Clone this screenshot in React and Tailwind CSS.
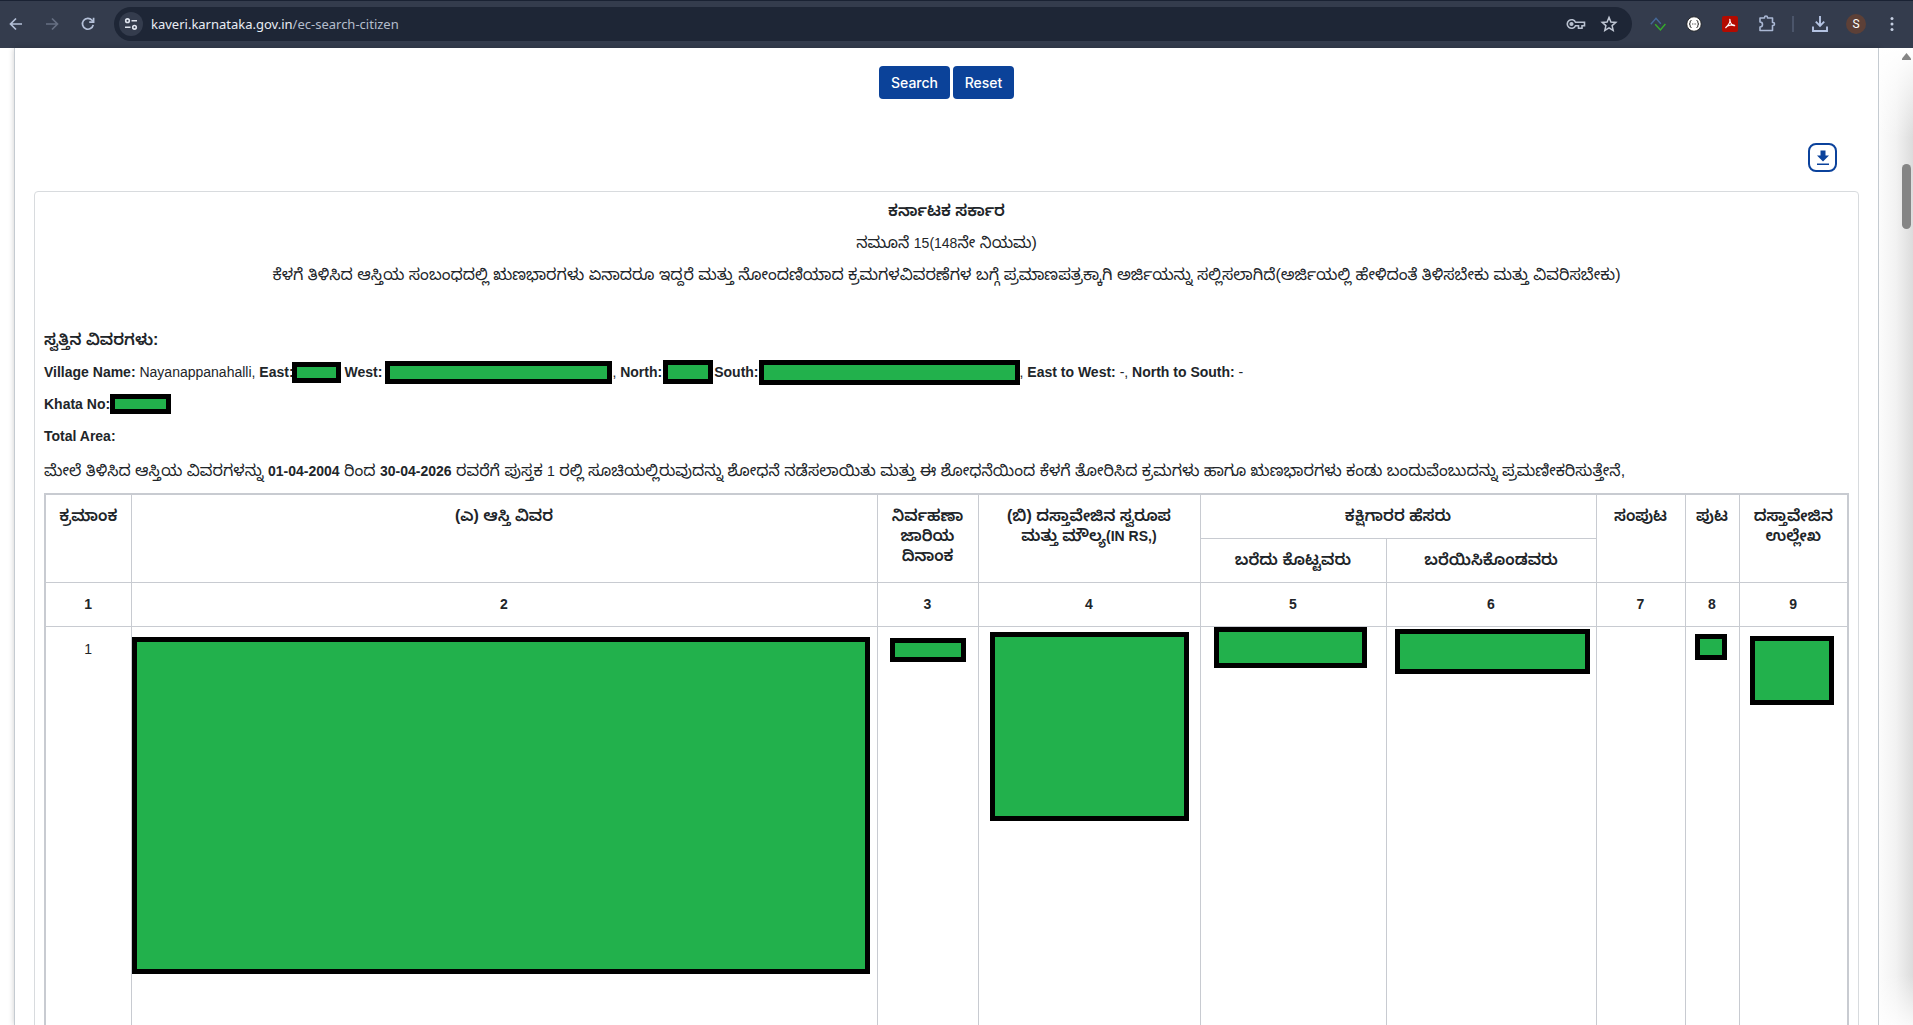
import React from "react";

const iconButton = "flex items-center justify-center shrink-0";

function BrowserBar() {
  return (
    <header className="flex h-12 shrink-0 items-center border-t border-[#1a2233] bg-[#343c4d] pb-px pr-[13px] text-[#b9c5dc]">
      <button aria-label="Back" className={`${iconButton} w-8`}>
        <svg width="16" height="16" viewBox="0 0 16 16" fill="none" stroke="#b4c0d8" strokeWidth="1.7">
          <path d="M14 8H3M8 2.5 2.5 8 8 13.5" />
        </svg>
      </button>
      <button aria-label="Forward" className={`${iconButton} ml-1 w-8`}>
        <svg width="16" height="16" viewBox="0 0 16 16" fill="none" stroke="#666f82" strokeWidth="1.7">
          <path d="M2 8h11M8 2.5 13.5 8 8 13.5" />
        </svg>
      </button>
      <button aria-label="Reload" className={`${iconButton} ml-1 w-8`}>
        <svg width="16" height="16" viewBox="0 0 16 16" fill="none" stroke="#b4c0d8" strokeWidth="1.7">
          <path d="M13.2 8.8A5.4 5.4 0 1 1 12 4.300L13.5 6" />
          <path d="M13.6 1.8V6.2H9.2" />
        </svg>
      </button>
      <div className="ml-[10px] flex h-[34px] flex-1 items-center rounded-full bg-[#1e2636] pl-[5px] pr-[14px]">
        <button aria-label="Site information" className={`${iconButton} size-6 rounded-full bg-[#343c4d]`}>
          <svg width="14" height="14" viewBox="0 0 14 14" fill="none" stroke="#dfe4ee" strokeWidth="1.6">
            <circle cx="3.5" cy="3.7" r="1.8" />
            <path d="M7.5 3.7H13M1 10.3h5.5" />
            <circle cx="10.5" cy="10.3" r="1.8" />
          </svg>
        </button>
        <p className="ml-2 flex-1 font-['Noto_Sans',sans-serif] text-[13px] leading-5 text-[#b4bdcc]">
          <span className="text-[#e9edf5]">kaveri.karnataka.gov.in</span>/ec-search-citizen
        </p>
        <button aria-label="Passwords" className={iconButton}>
          <svg width="20" height="16" viewBox="0 0 20 16" fill="none" stroke="#b9c1d0" strokeWidth="1.6">
            <path d="M9.500 6.300A4.300 4.300 0 1 0 9.500 9.700H12.500V12.300H16V9.700H18.500V6.300Z" />
            <circle cx="5.5" cy="8" r="1.3" fill="#b9c1d0" />
          </svg>
        </button>
        <button aria-label="Bookmark this tab" className={`${iconButton} ml-[14px]`}>
          <svg width="18" height="18" viewBox="0 0 18 18" fill="none" stroke="#c0c7d4" strokeWidth="1.5">
            <path d="M9 2.400 10.900 7l4.900.400-3.700 3.200 1.100 4.800L9 12.900l-4.200 2.500 1.100-4.800L2.200 7.400 7.100 7Z" />
          </svg>
        </button>
      </div>
      <button aria-label="Diff extension" className={`${iconButton} ml-[18px]`}>
        <svg width="16" height="16" viewBox="0 0 16 16" fill="none" strokeWidth="1.4">
          <path d="M.8 8.200 6 2.200l4.800 5.600" stroke="#46699a" />
          <path d="M5.200 8.200 10.400 14l5-6" stroke="#35ad2b" />
        </svg>
      </button>
      <button aria-label="Code extension" className={`${iconButton} ml-5`}>
        <svg width="16" height="16" viewBox="0 0 16 16" fill="none">
          <circle cx="8" cy="8" r="7.2" fill="#fff" stroke="#1c1c1c" strokeWidth="0.8" />
          <path d="M5.500 4.500q-1.400 0-1.400 1.400v1q0 1.100-1 1.100 1 0 1 1.100v1q0 1.400 1.400 1.400M10.500 4.500q1.400 0 1.400 1.400v1q0 1.100 1 1.100-1 0-1 1.100v1q0 1.400-1.400 1.400" stroke="#222" />
          <path d="M6 8h.8M7.700 8h.8M9.300 8h.8" stroke="#333" />
        </svg>
      </button>
      <button aria-label="PDF extension" className={`${iconButton} ml-5`}>
        <svg width="16" height="16" viewBox="0 0 16 16">
          <rect width="16" height="16" rx="2" fill="#b30b00" />
          <path d="M7.800 3.300c.6 1.700-.2 4.700-4.100 8.400.9-1.500 2.700-2.300 4.600-2.600 2-.300 4-.2 4.400.6-1.800.3-4.700-1.700-4.900-6.400Z" fill="none" stroke="#fff" strokeWidth="1.2" strokeLinejoin="round" />
        </svg>
      </button>
      <button aria-label="Extensions" className={`${iconButton} ml-5`}>
        <svg width="18" height="18" viewBox="0 0 18 18" fill="none" stroke="#aab8d4" strokeWidth="1.6" strokeLinejoin="round">
          <path d="M2 3h4.500V2.500a1.500 1.500 0 0 1 3 0V3H14.500V7.500h.5a1.500 1.500 0 0 1 0 3h-.5V15.500H2V12a2.500 2.500 0 0 0 0-5Z" />
        </svg>
      </button>
      <span className="ml-4 h-4 w-[2px] bg-[#4b556a]" />
      <button aria-label="Downloads" className={`${iconButton} ml-[17px]`}>
        <svg width="18" height="18" viewBox="0 0 18 18" fill="none" stroke="#b4c3e2" strokeWidth="1.9">
          <path d="M9 1v9.500M4.800 6.700 9 10.900l4.200-4.200M2 11.500v4.500h14v-4.500" />
        </svg>
      </button>
      <button aria-label="Profile" className={`${iconButton} ml-[17px] size-5 rounded-full bg-[#5d4037] font-['Roboto',sans-serif] text-[12px] text-white`}>
        S
      </button>
      <button aria-label="Menu" className={`${iconButton} ml-[18px] w-4`}>
        <svg width="4" height="16" viewBox="0 0 4 16" fill="#c5cfe2">
          <circle cx="2" cy="2.5" r="1.5" />
          <circle cx="2" cy="8" r="1.5" />
          <circle cx="2" cy="13.5" r="1.5" />
        </svg>
      </button>
    </header>
  );
}

function Redacted({ className }) {
  return <span className={`block shrink-0 border-[5px] border-black bg-[#22b14c] ${className}`} />;
}

const cell = "border border-[#c8cbd1] align-top";
const th = `${cell} px-1 pt-[11px] pb-3 font-semibold`;
const thNumber = `${cell} px-1 pt-[11px] pb-3 text-[14px]`;

function RecordTable() {
  return (
    <table className="mt-[6px] w-full table-fixed border-collapse border-2 border-[#c8cbd1] text-center text-[16px] leading-5">
      <colgroup>
        <col className="w-[86px]" />
        <col />
        <col className="w-[101px]" />
        <col className="w-[222px]" />
        <col className="w-[186px]" />
        <col className="w-[210px]" />
        <col className="w-[89px]" />
        <col className="w-[54px]" />
        <col className="w-[109px]" />
      </colgroup>
      <thead>
        <tr>
          <th rowSpan={2} className={th}>ಕ್ರಮಾಂಕ</th>
          <th rowSpan={2} className={th}>(ಎ) ಆಸ್ತಿ ವಿವರ</th>
          <th rowSpan={2} className={th}>ನಿರ್ವಹಣಾ<br />ಜಾರಿಯ<br />ದಿನಾಂಕ</th>
          <th rowSpan={2} className={th}>
            (ಬಿ) ದಸ್ತಾವೇಜಿನ ಸ್ವರೂಪ<br />ಮತ್ತು ಮೌಲ್ಯ<span className="text-[14px]">(IN RS,)</span>
          </th>
          <th colSpan={2} className={th}>ಕಕ್ಷಿಗಾರರ ಹೆಸರು</th>
          <th rowSpan={2} className={th}>ಸಂಪುಟ</th>
          <th rowSpan={2} className={th}>ಪುಟ</th>
          <th rowSpan={2} className={th}>ದಸ್ತಾವೇಜಿನ<br />ಉಲ್ಲೇಖ</th>
        </tr>
        <tr>
          <th className={th}>ಬರೆದು ಕೊಟ್ಟವರು</th>
          <th className={th}>ಬರೆಯಿಸಿಕೊಂಡವರು</th>
        </tr>
        <tr>
          {[1, 2, 3, 4, 5, 6, 7, 8, 9].map((n) => (
            <th key={n} className={thNumber}>{n}</th>
          ))}
        </tr>
      </thead>
      <tbody>
        <tr className="h-[480px]">
          <td className={`${cell} py-3 text-[14px]`}>1</td>
          <td className={`${cell} pr-[7px] pt-[10px]`}><Redacted className="h-[337px]" /></td>
          <td className={`${cell} px-3 pt-[11px]`}><Redacted className="h-6" /></td>
          <td className={`${cell} px-[11px] pt-[5px]`}><Redacted className="h-[189px]" /></td>
          <td className={`${cell} pl-[13px] pr-[19px]`}><Redacted className="h-[41px]" /></td>
          <td className={`${cell} pl-2 pr-[6px] pt-[2px]`}><Redacted className="h-[45px]" /></td>
          <td className={cell} />
          <td className={`${cell} pl-[9px] pr-3 pt-[7px]`}><Redacted className="h-[26px]" /></td>
          <td className={`${cell} pl-[10px] pr-[13px] pt-[9px]`}><Redacted className="h-[69px]" /></td>
        </tr>
      </tbody>
    </table>
  );
}

export default function App() {
  return (
    <div className="flex h-screen flex-col overflow-hidden bg-white font-['Liberation_Sans','Noto_Sans_Kannada',sans-serif] text-[14px] text-[#212529]">
      <BrowserBar />
      <div className="flex min-h-0 flex-1 pl-[14px]">
        <main className="min-w-0 flex-1 border-x border-[#c5cbd1] px-[19px] pt-[18px] shadow-[0_0_6px_rgba(0,0,0,0.2)]">
          <div className="flex justify-center gap-[3px] font-['Inter',sans-serif] text-[14px] font-medium text-white">
            <button className="h-[33px] w-[71px] rounded bg-[#0b4299]">Search</button>
            <button className="h-[33px] w-[61px] rounded bg-[#0b4299]">Reset</button>
          </div>
          <div className="mt-11 flex justify-end pr-[22px]">
            <button aria-label="Download" className="flex size-[29px] items-center justify-center rounded-lg border-2 border-[#0b429c]">
              <svg width="14" height="16" viewBox="0 0 14 16" fill="#0b429c">
                <path d="M4.500.500h5v5H13l-6 6-6-6h3.500ZM1 13.500h12V15H1Z" />
              </svg>
            </button>
          </div>
          <section className="mt-[19px] rounded border border-[#d8dbde] px-[9px] pt-[3px]">
            <div className="text-center text-[16px] leading-8">
              <h1 className="font-semibold">ಕರ್ನಾಟಕ ಸರ್ಕಾರ</h1>
              <p>ನಮೂನೆ <span className="text-[14px]">15(148</span>ನೇ ನಿಯಮ)</p>
              <p className="whitespace-nowrap">
                ಕೆಳಗೆ ತಿಳಿಸಿದ ಆಸ್ತಿಯ ಸಂಬಂಧದಲ್ಲಿ ಋಣಭಾರಗಳು ಏನಾದರೂ ಇದ್ದರೆ ಮತ್ತು ನೋಂದಣಿಯಾದ ಕ್ರಮಗಳವಿವರಣೆಗಳ ಬಗ್ಗೆ ಪ್ರಮಾಣಪತ್ರಕ್ಕಾಗಿ ಅರ್ಜಿಯನ್ನು ಸಲ್ಲಿಸಲಾಗಿದೆ(ಅರ್ಜಿಯಲ್ಲಿ ಹೇಳಿದಂತೆ ತಿಳಿಸಬೇಕು ಮತ್ತು ವಿವರಿಸಬೇಕು)
              </p>
            </div>
            <div className="mt-[33px] leading-8">
              <h2 className="text-[16px] font-semibold">ಸ್ವತ್ತಿನ ವಿವರಗಳು:</h2>
              <div className="flex h-8 items-center whitespace-pre">
                <b>Village Name:</b> Nayanappanahalli, <b>East:</b>
                <Redacted className="-ml-0.5 h-[21px] w-[49px]" />
                <b className="ml-1">West:</b>
                <Redacted className="ml-[3px] h-[23px] w-[227px]" />
                , <b>North:</b>
                <Redacted className="ml-px h-6 w-[50px]" />
                <b className="ml-px">South:</b>
                <Redacted className="h-[25px] w-[261px]" />
                , <b>East to West:</b> -, <b>North to South:</b> -
              </div>
              <div className="flex h-8 items-center">
                <b>Khata No:</b>
                <Redacted className="h-5 w-[61px]" />
              </div>
              <p className="font-bold">Total Area:</p>
              <p className="mt-[3px] whitespace-nowrap text-[16px]">
                ಮೇಲೆ ತಿಳಿಸಿದ ಆಸ್ತಿಯ ವಿವರಗಳನ್ನು <b className="text-[14px]">01-04-2004</b> ರಿಂದ <b className="text-[14px]">30-04-2026</b> ರವರೆಗೆ ಪುಸ್ತಕ <span className="text-[14px]">1</span> ರಲ್ಲಿ ಸೂಚಿಯಲ್ಲಿರುವುದನ್ನು ಶೋಧನೆ ನಡೆಸಲಾಯಿತು ಮತ್ತು ಈ ಶೋಧನೆಯಿಂದ ಕೆಳಗೆ ತೋರಿಸಿದ ಕ್ರಮಗಳು ಹಾಗೂ ಋಣಭಾರಗಳು ಕಂಡು ಬಂದುವೆಂಬುದನ್ನು ಪ್ರಮಣೀಕರಿಸುತ್ತೇನೆ,
              </p>
            </div>
            <RecordTable />
          </section>
        </main>
        <div className="flex w-[34px] shrink-0 flex-col items-end bg-[linear-gradient(to_bottom,white,transparent_90px),linear-gradient(to_top,rgba(255,255,255,0.8),transparent_50px),linear-gradient(to_right,#fcfcfc,#f2f2f2_50%,#dcdcdc)] pr-[2px] pt-[5px]">
          <svg width="9" height="7" viewBox="0 0 9 7" fill="#858585">
            <path d="M4.500 0 9 5.500V7H0V5.500Z" />
          </svg>
          <span className="mt-[104px] h-[65px] w-[9px] rounded-full bg-[#858585]" />
        </div>
      </div>
    </div>
  );
}
